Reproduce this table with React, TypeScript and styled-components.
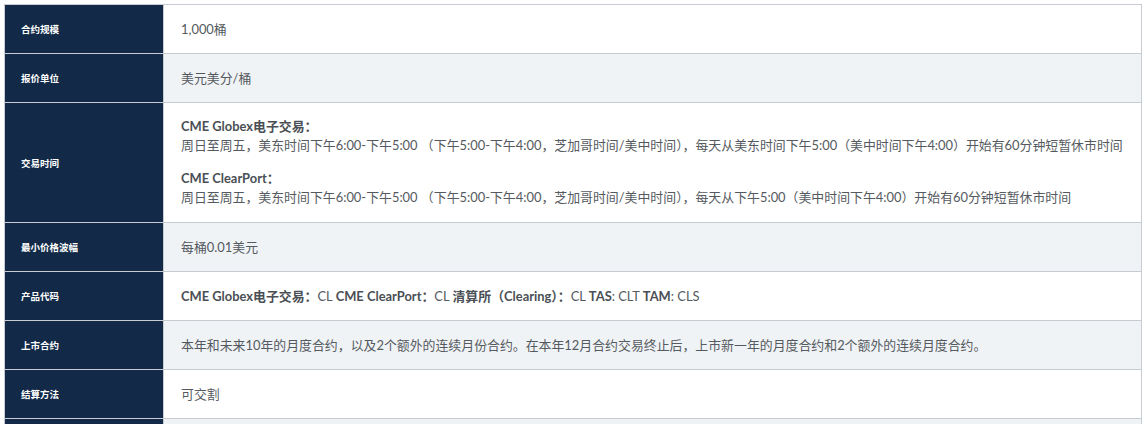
import React from "react";
import styled, { createGlobalStyle } from "styled-components";

const GlobalStyle = createGlobalStyle`
  body {
    margin: 0;
    background: #ffffff;
    font-family: "Lato", "Noto Sans CJK SC", sans-serif;
  }
`;

const Page = styled.div`
  padding: 4px 4px 0 4px;
`;

const SpecTable = styled.table`
  width: 100%;
  border-collapse: collapse;
  border: 1px solid #c6ccd2;
`;

const Row = styled.tr<{ $striped: boolean }>`
  background: ${(p) => (p.$striped ? "#f0f3f6" : "#ffffff")};
  border-bottom: 1px solid #c6ccd2;
`;

const Label = styled.th`
  width: 142px;
  height: 48px;
  padding: 0 0 0 16px;
  background: #122a48;
  color: #ffffff;
  font-size: 9.5px;
  font-weight: 700;
  text-align: left;
  vertical-align: middle;
  border-right: 1px solid #c6ccd2;
`;

const Value = styled.td`
  padding: 0 4px 0 17px;
  color: #555a60;
  font-size: 12.9px;
  line-height: 19px;
  vertical-align: middle;

  strong {
    color: #4a4f55;
    font-weight: 700;
  }
`;

const Para = styled.p`
  margin: 14px 0;
  white-space: nowrap;

  &:last-child {
    margin-bottom: 15px;
  }
`;

type Spec = {
  label: string;
  content: React.ReactNode;
};

const specs: Spec[] = [
  { label: "合约规模", content: "1,000桶" },
  { label: "报价单位", content: "美元美分/桶" },
  {
    label: "交易时间",
    content: (
      <>
        <Para>
          <strong>CME Globex电子交易：</strong>
          <br />
          周日至周五，美东时间下午6:00-下午5:00 （下午5:00-下午4:00，芝加哥时间/美中时间），每天从美东时间下午5:00（美中时间下午4:00）开始有60分钟短暂休市时间
        </Para>
        <Para>
          <strong>CME ClearPort：</strong>
          <br />
          周日至周五，美东时间下午6:00-下午5:00 （下午5:00-下午4:00，芝加哥时间/美中时间），每天从下午5:00（美中时间下午4:00）开始有60分钟短暂休市时间
        </Para>
      </>
    ),
  },
  { label: "最小价格波幅", content: "每桶0.01美元" },
  {
    label: "产品代码",
    content: (
      <>
        <strong>CME Globex电子交易：</strong>CL <strong>CME ClearPort：</strong>CL{" "}
        <strong>清算所（Clearing）：</strong>CL <strong>TAS</strong>: CLT{" "}
        <strong>TAM</strong>: CLS
      </>
    ),
  },
  {
    label: "上市合约",
    content:
      "本年和未来10年的月度合约，以及2个额外的连续月份合约。在本年12月合约交易终止后，上市新一年的月度合约和2个额外的连续月度合约。",
  },
  { label: "结算方法", content: "可交割" },
  { label: "交割地点", content: "俄克拉荷马州库欣" },
];

export default function App() {
  return (
    <Page>
      <GlobalStyle />
      <SpecTable>
        <tbody>
          {specs.map((spec, i) => (
            <Row key={spec.label} $striped={i % 2 === 1}>
              <Label>{spec.label}</Label>
              <Value>{spec.content}</Value>
            </Row>
          ))}
        </tbody>
      </SpecTable>
    </Page>
  );
}
